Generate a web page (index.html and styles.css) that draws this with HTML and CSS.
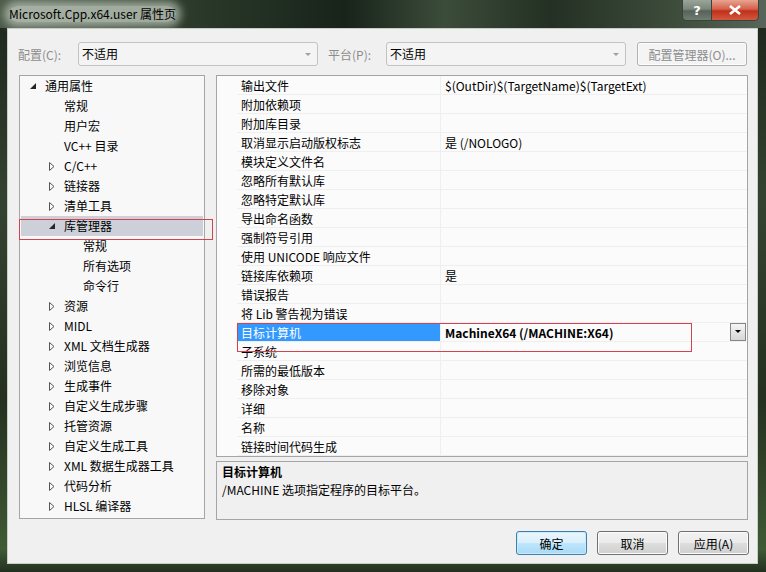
FILE: index.html
```html
<!DOCTYPE html>
<html>

<head>
    <title>Microsoft.Cpp.x64.user 属性页</title>
    <meta charset="utf-8">
    <link rel="stylesheet" href="styles.css">
</head>

<body>
    <div class="window">
        <div class="titlebar">
            <span class="title">Microsoft.Cpp.x64.user 属性页</span>
            <div class="caption">
                <span class="cap help">?</span>
                <span class="cap close">
                    <svg width="14" height="10" viewBox="0 0 14 10"><path d="M2 1L12 9M12 1L2 9" stroke="#fff" stroke-width="2.6"/></svg>
                </span>
            </div>
        </div>

        <div class="client">
            <div class="configbar">
                <span class="label first">配置(C):</span>
                <div class="combo">不适用<span class="arrow"></span></div>
                <span class="label">平台(P):</span>
                <div class="combo">不适用<span class="arrow"></span></div>
                <button class="btn manager">配置管理器(O)...</button>
            </div>

            <div class="main">
                <div class="tree">
                    <div class="node l0"><span class="tw"><svg width="7" height="7"><path d="M6 0V6H0Z" fill="#262626"/></svg></span>通用属性</div>
                    <div class="node l1"><span class="tw"></span>常规</div>
                    <div class="node l1"><span class="tw"></span>用户宏</div>
                    <div class="node l1"><span class="tw"></span>VC++ 目录</div>
                    <div class="node l1"><span class="tw"><svg width="6" height="9"><path d="M.5 .5L5 4.5L.5 8.5Z" fill="none" stroke="#555"/></svg></span>C/C++</div>
                    <div class="node l1"><span class="tw"><svg width="6" height="9"><path d="M.5 .5L5 4.5L.5 8.5Z" fill="none" stroke="#555"/></svg></span>链接器</div>
                    <div class="node l1"><span class="tw"><svg width="6" height="9"><path d="M.5 .5L5 4.5L.5 8.5Z" fill="none" stroke="#555"/></svg></span>清单工具</div>
                    <div class="node l1 sel"><span class="tw"><svg width="7" height="7"><path d="M6 0V6H0Z" fill="#262626"/></svg></span>库管理器</div>
                    <div class="node l2"><span class="tw"></span>常规</div>
                    <div class="node l2"><span class="tw"></span>所有选项</div>
                    <div class="node l2"><span class="tw"></span>命令行</div>
                    <div class="node l1"><span class="tw"><svg width="6" height="9"><path d="M.5 .5L5 4.5L.5 8.5Z" fill="none" stroke="#555"/></svg></span>资源</div>
                    <div class="node l1"><span class="tw"><svg width="6" height="9"><path d="M.5 .5L5 4.5L.5 8.5Z" fill="none" stroke="#555"/></svg></span>MIDL</div>
                    <div class="node l1"><span class="tw"><svg width="6" height="9"><path d="M.5 .5L5 4.5L.5 8.5Z" fill="none" stroke="#555"/></svg></span>XML 文档生成器</div>
                    <div class="node l1"><span class="tw"><svg width="6" height="9"><path d="M.5 .5L5 4.5L.5 8.5Z" fill="none" stroke="#555"/></svg></span>浏览信息</div>
                    <div class="node l1"><span class="tw"><svg width="6" height="9"><path d="M.5 .5L5 4.5L.5 8.5Z" fill="none" stroke="#555"/></svg></span>生成事件</div>
                    <div class="node l1"><span class="tw"><svg width="6" height="9"><path d="M.5 .5L5 4.5L.5 8.5Z" fill="none" stroke="#555"/></svg></span>自定义生成步骤</div>
                    <div class="node l1"><span class="tw"><svg width="6" height="9"><path d="M.5 .5L5 4.5L.5 8.5Z" fill="none" stroke="#555"/></svg></span>托管资源</div>
                    <div class="node l1"><span class="tw"><svg width="6" height="9"><path d="M.5 .5L5 4.5L.5 8.5Z" fill="none" stroke="#555"/></svg></span>自定义生成工具</div>
                    <div class="node l1"><span class="tw"><svg width="6" height="9"><path d="M.5 .5L5 4.5L.5 8.5Z" fill="none" stroke="#555"/></svg></span>XML 数据生成器工具</div>
                    <div class="node l1"><span class="tw"><svg width="6" height="9"><path d="M.5 .5L5 4.5L.5 8.5Z" fill="none" stroke="#555"/></svg></span>代码分析</div>
                    <div class="node l1"><span class="tw"><svg width="6" height="9"><path d="M.5 .5L5 4.5L.5 8.5Z" fill="none" stroke="#555"/></svg></span>HLSL 编译器</div>
                </div>

                <div class="right">
                    <div class="grid">
                        <div class="row"><span class="gut"></span><span class="name">输出文件</span><span class="val">$(OutDir)$(TargetName)$(TargetExt)</span></div>
                        <div class="row"><span class="gut"></span><span class="name">附加依赖项</span><span class="val"></span></div>
                        <div class="row"><span class="gut"></span><span class="name">附加库目录</span><span class="val"></span></div>
                        <div class="row"><span class="gut"></span><span class="name">取消显示启动版权标志</span><span class="val">是 (/NOLOGO)</span></div>
                        <div class="row"><span class="gut"></span><span class="name">模块定义文件名</span><span class="val"></span></div>
                        <div class="row"><span class="gut"></span><span class="name">忽略所有默认库</span><span class="val"></span></div>
                        <div class="row"><span class="gut"></span><span class="name">忽略特定默认库</span><span class="val"></span></div>
                        <div class="row"><span class="gut"></span><span class="name">导出命名函数</span><span class="val"></span></div>
                        <div class="row"><span class="gut"></span><span class="name">强制符号引用</span><span class="val"></span></div>
                        <div class="row"><span class="gut"></span><span class="name">使用 UNICODE 响应文件</span><span class="val"></span></div>
                        <div class="row"><span class="gut"></span><span class="name">链接库依赖项</span><span class="val">是</span></div>
                        <div class="row"><span class="gut"></span><span class="name">错误报告</span><span class="val"></span></div>
                        <div class="row"><span class="gut"></span><span class="name">将 Lib 警告视为错误</span><span class="val"></span></div>
                        <div class="row sel"><span class="gut"></span><span class="name">目标计算机</span><span class="val"><b>MachineX64 (/MACHINE:X64)</b><span class="drop"></span></span></div>
                        <div class="row"><span class="gut"></span><span class="name">子系统</span><span class="val"></span></div>
                        <div class="row"><span class="gut"></span><span class="name">所需的最低版本</span><span class="val"></span></div>
                        <div class="row"><span class="gut"></span><span class="name">移除对象</span><span class="val"></span></div>
                        <div class="row"><span class="gut"></span><span class="name">详细</span><span class="val"></span></div>
                        <div class="row"><span class="gut"></span><span class="name">名称</span><span class="val"></span></div>
                        <div class="row"><span class="gut"></span><span class="name">链接时间代码生成</span><span class="val"></span></div>
                    </div>
                    <div class="desc">
                        <b>目标计算机</b>
                        <div>/MACHINE 选项指定程序的目标平台。</div>
                    </div>
                </div>
            </div>

            <div class="footer">
                <button class="btn ok">确定</button>
                <button class="btn">取消</button>
                <button class="btn">应用(A)</button>
            </div>
        </div>

        <!-- rode markeringer -->
        <div class="mark mark-tree"></div>
        <div class="mark mark-grid"></div>
    </div>
</body>

</html>
```

FILE: styles.css
```css
body {
    margin: 0;
    font-family: "Noto Sans CJK SC", sans-serif;
    font-size: 12px;
    color: #000;
}

.window {
    position: relative;
    width: 766px;
    height: 572px;
    display: flex;
    flex-direction: column;
    background: linear-gradient(180deg, #1c251c 0%, #34432f 35%, #25301f 70%, #3f5a35 96%, #22301f 100%);
    overflow: hidden;
}

.titlebar {
    height: 28px;
    flex: none;
    display: flex;
    justify-content: space-between;
    align-items: flex-start;
    background: linear-gradient(90deg, #4c5a4a 0%, #2b3a2a 25%, #18231a 45%, #3c4c3a 58%, #233023 72%, #3e4c3c 88%, #58655a 100%);
}

.title {
    margin: 6px 0 0 9px;
    line-height: 16px;
    font-size: 12px;
    color: #000;
    background: rgba(196, 206, 194, 0.75);
    border-radius: 8px;
    box-shadow: 0 0 8px 5px rgba(196, 206, 194, 0.7);
}

.caption {
    display: flex;
    margin-right: 7px;
    border: 1px solid #3a4436;
    border-top: none;
    border-radius: 0 0 5px 5px;
    overflow: hidden;
}

.cap {
    height: 20px;
    display: flex;
    align-items: center;
    justify-content: center;
    color: #fff;
    font-weight: bold;
}

.help {
    width: 28px;
    font-size: 13px;
    font-family: "DejaVu Sans", sans-serif;
    background: linear-gradient(180deg, #9aa49a 0%, #7b877b 45%, #56625a 55%, #6f7d72 100%);
    border-right: 1px solid #3a4436;
}

.close {
    width: 46px;
    background: linear-gradient(180deg, #e8a493 0%, #d5614a 45%, #c0301c 55%, #d2583f 100%);
}

.client {
    flex: 1;
    margin: 0 8px 8px 7px;
    background: #f0f0f0;
    border: 1px solid #c5cfc3;
    display: flex;
    flex-direction: column;
}

.configbar {
    display: flex;
    align-items: center;
    height: 24px;
    margin-top: 13px;
    padding-left: 10px;
}

.label {
    width: 58px;
    color: #8d8d8d;
    padding-left: 10px;
}

.label.first {
    width: 60px;
    padding-left: 0;
}

.combo {
    position: relative;
    width: 235px;
    height: 22px;
    line-height: 22px;
    padding-left: 3px;
    border: 1px solid #c2c2c2;
    border-radius: 3px;
    background: #f4f4f4;
}

.arrow {
    position: absolute;
    right: 6px;
    top: 10px;
    border-left: 3px solid transparent;
    border-right: 3px solid transparent;
    border-top: 3px solid #a0a0a0;
}

.btn {
    font-family: inherit;
    font-size: 12px;
    height: 24px;
    border: 1px solid #707070;
    border-radius: 3px;
    background: linear-gradient(180deg, #f2f2f2 0%, #ebebeb 48%, #dddddd 52%, #cfcfcf 100%);
    box-shadow: inset 0 0 0 1px #fcfcfc;
    padding: 0;
    color: #000;
}

.manager {
    width: 110px;
    margin-left: 11px;
    color: #8d8d8d;
    border-color: #adb2b5;
    background: #f4f4f4;
}

.main {
    display: flex;
    margin-top: 9px;
    padding-left: 11px;
}

.tree {
    width: 184px;
    height: 442px;
    border: 1px solid #a5a5a5;
    background: #f8f8f8;
}

.node {
    height: 20px;
    line-height: 22px;
    margin: 0 1px;
    display: flex;
    align-items: center;
    white-space: nowrap;
}

.tw {
    width: 15px;
    flex: none;
    display: flex;
    align-items: center;
}

.l0 { padding-left: 9px; }
.l1 { padding-left: 28px; }
.l2 { padding-left: 47px; }

.node.sel {
    background: #cdd0d9;
}

.right {
    margin-left: 11px;
    width: 532px;
}

.grid {
    height: 380px;
    border: 1px solid #a5a5a5;
    background: #fbfbfb;
}

.row {
    display: grid;
    grid-template-columns: 20px 204px 1fr;
    height: 19px;
    line-height: 20px;
}

.row .name,
.row .val {
    border-bottom: 1px solid #efefef;
    white-space: nowrap;
    overflow: hidden;
}

.name {
    padding-left: 4px;
    border-right: 1px solid #efefef;
}

.val {
    padding-left: 4px;
    display: flex;
    justify-content: space-between;
}

.row.sel .name {
    background: #3399ff;
    color: #fff;
}

.drop {
    width: 14px;
    height: 16px;
    margin-right: 1px;
    border: 1px solid #868686;
    background: linear-gradient(180deg, #f6f6f6, #d6d6d6);
    position: relative;
}

.drop::after {
    content: "";
    position: absolute;
    left: 4px;
    top: 6px;
    border-left: 3px solid transparent;
    border-right: 3px solid transparent;
    border-top: 3px solid #000;
}

.desc {
    margin-top: 4px;
    height: 55px;
    border: 1px solid #a5a5a5;
    background: #f0f0f0;
    padding: 1px 5px;
    line-height: 18px;
}

.footer {
    display: flex;
    justify-content: flex-end;
    gap: 10px;
    margin-top: 11px;
    padding-right: 8px;
}

.footer .btn {
    width: 71px;
}

.btn.ok {
    border-color: #3c7fb1;
    background: linear-gradient(180deg, #eaf6fd 0%, #d9f0fc 48%, #bee6fd 52%, #a7d9f5 100%);
    box-shadow: inset 0 0 0 1px #c9ebfc;
}

.mark {
    position: absolute;
    border: 1px solid #d2424f;
}

.mark-tree {
    left: 19px;
    top: 219px;
    width: 192px;
    height: 19px;
}

.mark-grid {
    left: 237px;
    top: 323px;
    width: 453px;
    height: 27px;
}
```
